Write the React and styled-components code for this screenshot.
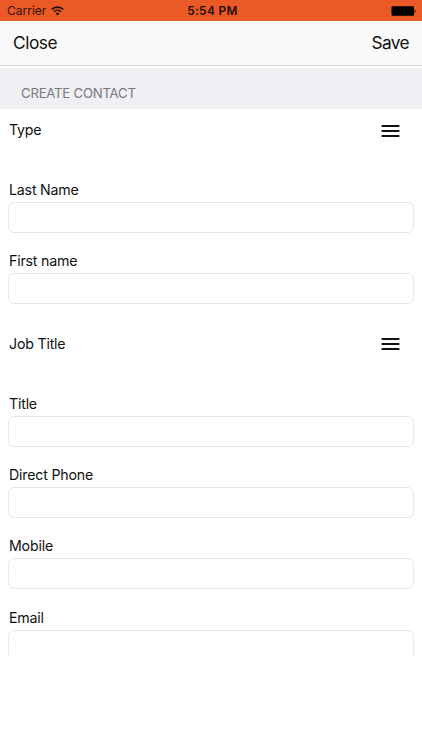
import React from "react";
import styled, { createGlobalStyle } from "styled-components";

const Global = createGlobalStyle`
  *{box-sizing:border-box}
  html,body{margin:0;background:#fff}
  body{font-family:Inter,"Liberation Sans",sans-serif;color:#111;overflow:hidden}
`;
const Screen = styled.div`width:422px;height:750px;display:flex;flex-direction:column;background:#fff;`;
const StatusBar = styled.header`
  height:21px;flex:none;background:#eb5926;display:grid;grid-template-columns:1fr auto 1fr;align-items:center;
  padding:1px 6px 0 7px;font-size:12px;line-height:20px;color:#35130a;
`;
const Carrier = styled.div`display:flex;align-items:center;gap:5px;`;
const Clock = styled.div`font-weight:600;letter-spacing:.4px;font-size:11.8px;padding-left:2px;color:#240c05;`;
const Battery = styled.svg`justify-self:end;display:block;`;
const NavBar = styled.nav`
  height:45px;flex:none;display:flex;justify-content:space-between;align-items:center;
  padding:0 13px;background:#f9f9f9;border-bottom:1px solid #d2d2d4;
`;
const NavButton = styled.button`
  border:0;background:none;padding:0;font:400 17.3px/24px Inter,sans-serif;color:#111;
  letter-spacing:${p => p.$tight ? "-.65px" : "-.45px"};
`;
const SectionHeader = styled.h2`
  height:41px;flex:none;margin:2px 0 0;padding:16px 21px 0;background:#efeff4;color:#78787d;
  font-size:13.2px;line-height:18px;font-weight:400;letter-spacing:-.24px;
`;
const Form = styled.form`height:547px;flex:none;overflow:hidden;padding:0 8px;letter-spacing:-.2px;`;
const PickerRow = styled.div`
  display:flex;justify-content:space-between;align-items:center;height:20px;
  margin:${p => p.$first ? "12px" : "11px"} 14px ${p => p.$first ? "40px" : "40.6px"} 1px;font-size:14.2px;
`;
const PickerName = styled.span`line-height:18px;padding-bottom:${p => p.$first ? "2px" : "0"};`;
const Field = styled.label`display:block;height:71.2px;font-size:14.2px;`;
const FieldName = styled.span`display:block;height:21px;line-height:18px;padding-left:1px;`;
const Input = styled.input`
  display:block;width:406px;height:31px;border:1px solid #e8e8e8;border-radius:6px;background:#fff;outline:0;
`;

const Picker = ({ label, first }) => (
  <PickerRow $first={first}>
    <PickerName $first={first}>{label}</PickerName>
    <svg width="19" height="14" viewBox="0 0 19 14"><path d="M.6 2h17.8M.6 7h17.8M.6 12h17.8" stroke="#111" strokeWidth="1.9" /></svg>
  </PickerRow>
);
const TextField = ({ label }) => <Field><FieldName>{label}</FieldName><Input /></Field>;

export default function App() {
  return (
    <Screen>
      <Global />
      <StatusBar>
        <Carrier>Carrier
          <svg width="13" height="10" viewBox="0 0 13 10" fill="none" stroke="#1c0b04" strokeWidth="1.6"><path d="M.8 3.4a8.2 8.2 0 0 1 11.4 0M3 5.7a5 5 0 0 1 7 0" /><path d="M6.5 9.4 4.6 7.5a2.8 2.8 0 0 1 3.8 0z" fill="#1c0b04" stroke="none" /></svg>
        </Carrier>
        <Clock>5:54 PM</Clock>
        <Battery width="25" height="11" viewBox="0 0 25 11"><rect x=".5" y=".3" width="22.5" height="9.5" rx="1.2" /><path d="M23.6 3.7c1.4.5 1.4 2.6 0 3.1z" /></Battery>
      </StatusBar>
      <NavBar><NavButton>Close</NavButton><NavButton $tight>Save</NavButton></NavBar>
      <SectionHeader>CREATE CONTACT</SectionHeader>
      <Form>
        <Picker label="Type" first />
        <TextField label="Last Name" />
        <TextField label="First name" />
        <Picker label="Job Title" />
        {["Title", "Direct Phone", "Mobile", "Email"].map(n => <TextField key={n} label={n} />)}
      </Form>
    </Screen>
  );
}
